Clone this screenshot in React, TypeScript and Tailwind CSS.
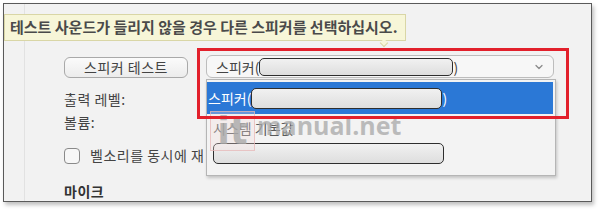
import { ChevronDown } from "lucide-react";

const font = { fontFamily: '"Noto Sans CJK KR", "Noto Sans", sans-serif' };

function Redact({ className }: { className: string }) {
  return (
    <span
      className={`inline-block rounded-[5px] border-[1.5px] border-[#2e2e2e] bg-gradient-to-b from-[#f1f1f1] to-[#dedede] ${className}`}
    />
  );
}

export default function App() {
  return (
    <div
      className="relative w-[600px] h-[212px] overflow-hidden bg-white text-[14px] text-[#3c3c3c]"
      style={font}
    >
      {/* window frame */}
      <div className="ml-[3px] mt-[3px] w-[589px] h-[199px] border border-[#5a5a5a] bg-[#f2f2f2] shadow-[2px_3px_4px_rgba(0,0,0,0.25)]">
        <div className="ml-[20px] h-full border-l border-[#e2e2e2] pl-[39px] pt-[51px]">
          <div className="flex items-center gap-[18px]">
            <button className="mt-[1px] h-[21px] w-[124px] rounded-[6px] border border-[#a9a9a9] bg-gradient-to-b from-[#fbfbfb] to-[#ececec] text-[14px] leading-none tracking-[0.5px] text-[#444]">
              스피커 테스트
            </button>
            <div className="flex h-[23px] w-[348px] items-center rounded-[6px] border border-[#bdbdbd] bg-[#f7f7f7] pl-[9px] pr-[8px]">
              <span className="leading-none text-[#444]">스피커(</span>
              <Redact className="h-[18px] w-[194px]" />
              <span className="leading-none text-[#444]">)</span>
              <span className="flex-1" />
              <ChevronDown size={12} strokeWidth={2.5} className="text-[#8a8a8a]" />
            </div>
          </div>
          <div className="mt-[11px] leading-[20px] tracking-[0.5px] text-[#444]">출력 레벨:</div>
          <div className="mt-[3px] leading-[20px] tracking-[0.5px] text-[#444]">볼륨:</div>
          <div className="mt-[13px] flex items-center gap-[10px]">
            <span className="h-[16px] w-[16px] rounded-[4px] border border-[#8a8a8a] bg-[#f7f7f7]" />
            <span className="tracking-[0.5px] text-[#444]">벨소리를 동시에 재</span>
          </div>
          <div className="mt-[15px] font-bold tracking-[0.5px] text-[#333]">마이크</div>
        </div>
      </div>

      {/* tooltip */}
      <div className="absolute left-[4px] top-[14px] flex h-[27px] w-[402px] items-center whitespace-nowrap border border-[#d9d6a6] bg-[#f7f6d8] pl-[5px] text-[15px] font-bold text-[#4a4a4a]">
        테스트 사운드가 들리지 않을 경우 다른 스피커를 선택하십시오.
        <span className="absolute left-[376px] top-[25px] h-[6px] w-[6px] rotate-45 border-b border-r border-[#d9d6a6] bg-[#f7f6d8]" />
      </div>

      {/* dropdown list */}
      <div className="absolute left-[206px] top-[79px] h-[97px] w-[350px] border border-[#b5b5b5] bg-[#f3f3f3] pt-[2px] shadow-[1px_2px_3px_rgba(0,0,0,0.2)]">
        <div className="flex h-[32px] w-[346px] items-center bg-[#2b78d6] pl-[1px] text-white">
          <span className="leading-none">스피커(</span>
          <Redact className="h-[21px] w-[191px]" />
          <span className="leading-none">)</span>
        </div>
        <div className="pl-[6px] pt-[4px] leading-[20px] text-[#5a5a5a]">시스템 기본값</div>
        <div className="pl-[6px] pt-[5px]">
          <Redact className="h-[21px] w-[231px]" />
        </div>
      </div>

      {/* watermark */}
      <div className="pointer-events-none absolute left-[210px] top-[111px] flex items-end">
        <div className="flex h-[40px] w-[45px] items-center justify-center border border-[#e5b5b5]/70 bg-[#f6dede]/30">
          <span className="text-[37px] font-bold leading-none text-[#a8a8a8]/80" style={{ fontFamily: '"DejaVu Sans", sans-serif' }}>
            it
          </span>
        </div>
        <span
          className="mb-[13px] ml-[2px] text-[25px] font-bold leading-none text-[#a8a8a8]/75"
          style={{ fontFamily: '"Open Sans", sans-serif' }}
        >
          manual.net
        </span>
      </div>

      {/* annotation */}
      <div className="pointer-events-none absolute left-[197px] top-[48px] h-[71px] w-[372px] border-[3px] border-[#e2202b]" />
    </div>
  );
}
